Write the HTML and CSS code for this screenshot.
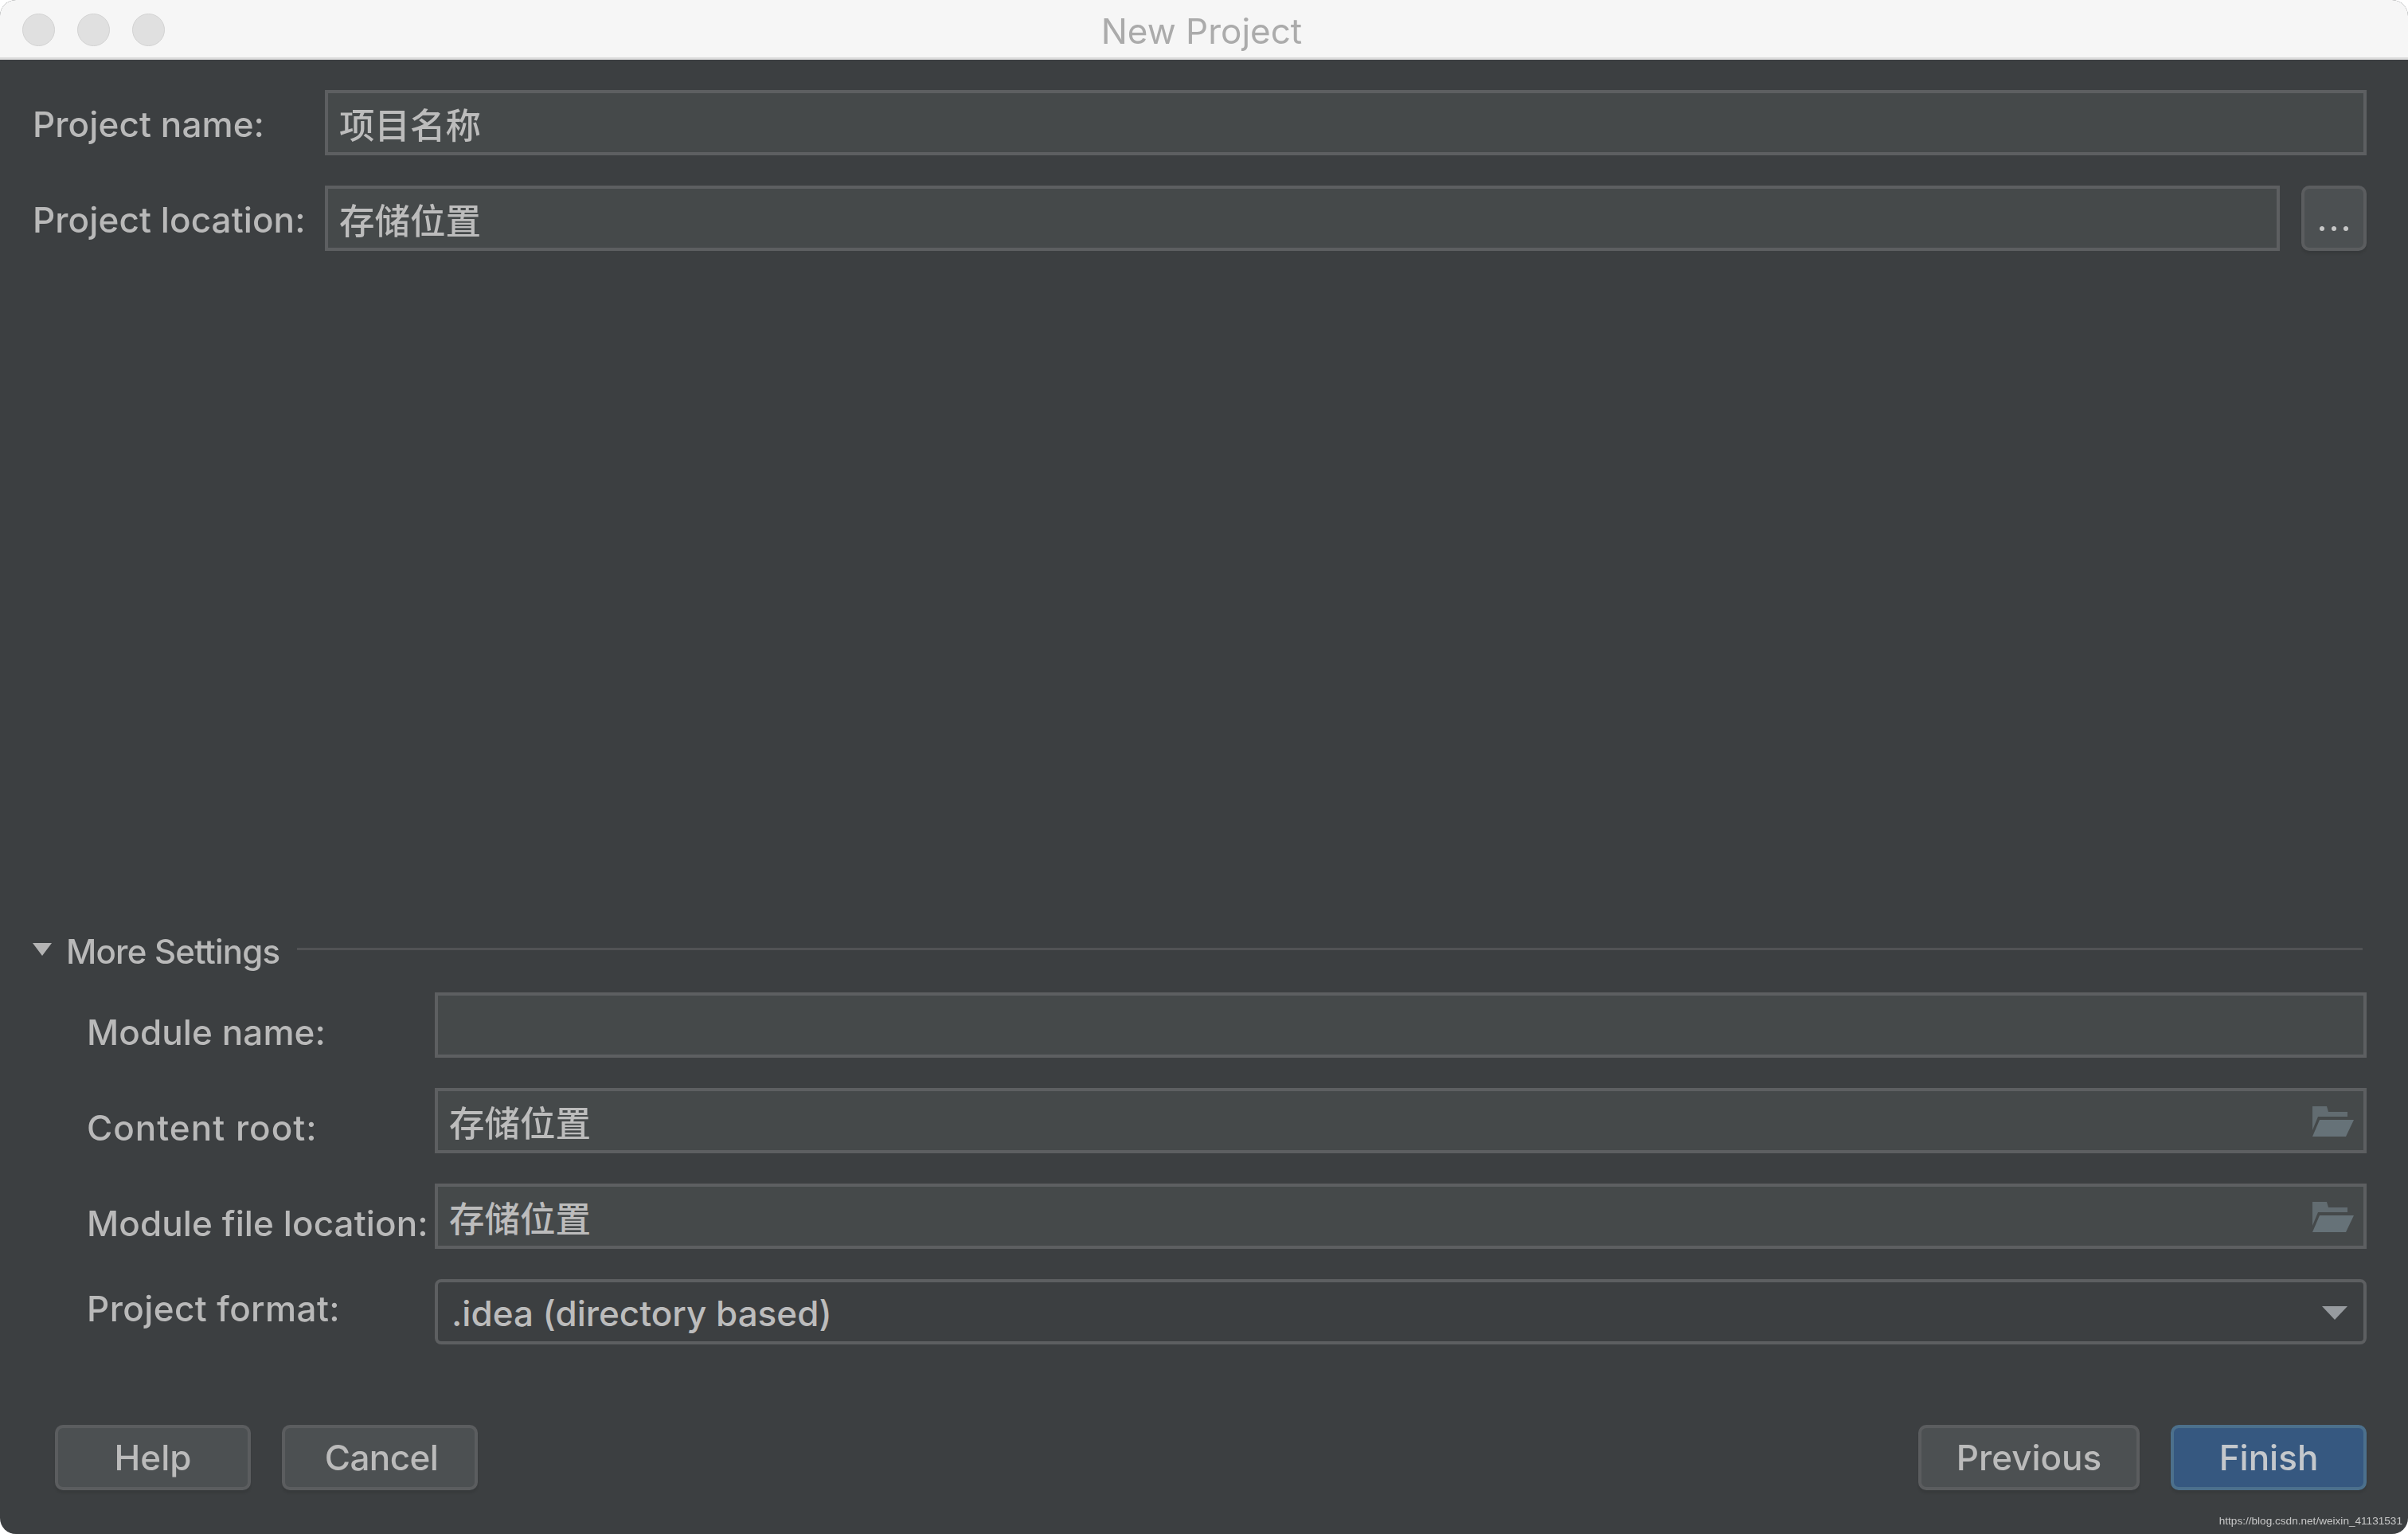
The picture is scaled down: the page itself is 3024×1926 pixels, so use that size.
FILE: index.html
```html
<!DOCTYPE html>
<html lang="zh">
<head>
<meta charset="utf-8">
<title>New Project</title>
<link rel="stylesheet" href="styles.css">
</head>
<body>
<div class="window">
  <header class="titlebar">
    <div class="lights"><span class="light"></span><span class="light"></span><span class="light"></span></div>
    <div class="title">New Project</div>
  </header>
  <main class="content">
    <section class="basic">
      <div class="label">Project name:</div>
      <div class="field wide">项目名称</div>
      <div class="label">Project location:</div>
      <div class="field">存储位置</div>
      <div class="browse">...</div>
    </section>
    <section class="more">
      <div class="more-head">
        <span class="disclosure"></span>
        <span class="more-title">More Settings</span>
        <span class="rule"></span>
      </div>
      <div class="settings">
        <div class="label low">Module name:</div>
        <div class="field"></div>
        <div class="label low spaced">Content root:</div>
        <div class="field">存储位置
          <svg class="folder" viewBox="0 0 52 38"><path class="folder-back" d="M0 0H18L20 7H44V13H7L0 30Z"/><path class="folder-front" d="M9 17H52L42 38H0Z"/></svg>
        </div>
        <div class="label low">Module file location:</div>
        <div class="field">存储位置
          <svg class="folder" viewBox="0 0 52 38"><path class="folder-back" d="M0 0H18L20 7H44V13H7L0 30Z"/><path class="folder-front" d="M9 17H52L42 38H0Z"/></svg>
        </div>
        <div class="label high">Project format:</div>
        <div class="select">.idea (directory based)<span class="caret"></span></div>
      </div>
    </section>
    <footer class="buttons">
      <div class="btn help">Help</div>
      <div class="btn cancel">Cancel</div>
      <div class="push"></div>
      <div class="btn previous">Previous</div>
      <div class="btn finish">Finish</div>
    </footer>
  </main>
  <div class="watermark">https://blog.csdn.net/weixin_41131531</div>
</div>
</body>
</html>
```
FILE: styles.css
```css
* { box-sizing: border-box; }
html, body { margin: 0; padding: 0; background: #fff; }
body { width: 3024px; height: 1926px; overflow: hidden; }

.window {
  position: relative;
  width: 3024px;
  height: 1926px;
  display: flex;
  flex-direction: column;
  border-radius: 20px;
  overflow: hidden;
  background: #3c3f41;
  color: #b9b9b9;
  font-family: Inter, "Noto Sans CJK SC", sans-serif;
  font-size: 44px;
  font-weight: 450;
  filter: blur(0.6px);
}

.titlebar {
  position: relative;
  flex: 0 0 75px;
  display: flex;
  align-items: center;
  justify-content: center;
  padding: 6px 6px 0 0;
  background: #f6f6f6;
  border-bottom: 3px solid #dcdcdc;
}
.lights {
  position: absolute;
  left: 28px;
  top: 17px;
  display: flex;
  gap: 28px;
}
.light {
  width: 41px;
  height: 41px;
  border-radius: 50%;
  background: #e0e0e0;
  border: 1px solid #d2d2d2;
}
.title { color: #ababab; font-size: 44px; font-weight: 400; }

.content {
  flex: 1;
  display: flex;
  flex-direction: column;
  padding: 38px 52px 55px 41px;
}

.basic {
  display: grid;
  grid-template-columns: 367px 1fr 82px;
  row-gap: 38px;
  align-items: center;
}
.basic .field:not(.wide) { margin-right: 27px; }
.wide { grid-column: 2 / 4; }

.label { white-space: nowrap; line-height: 52px; padding-top: 4px; letter-spacing: 0.1px; }
.low { padding-top: 18px; }
.high { padding-top: 0; margin-top: -8px; letter-spacing: 0.4px; }
.spaced { letter-spacing: 1px; }

.field {
  position: relative;
  height: 82px;
  display: flex;
  align-items: center;
  padding: 0 14px;
  background: #45494a;
  border: 4px solid #5d5f61;
  font-family: "Noto Sans CJK SC", sans-serif;
  font-size: 44.5px;
  color: #bcbcbc;
}

.browse {
  height: 82px;
  display: flex;
  align-items: center;
  justify-content: center;
  padding-top: 6px;
  background: #4c5052;
  border: 4px solid #5b5d5f;
  border-radius: 10px;
  box-shadow: 0 4px 3px rgba(0, 0, 0, 0.08);
  font-size: 36px;
  font-weight: 700;
  letter-spacing: 3px;
  text-indent: 3px;
  color: #c6c6c6;
}

.more { margin-top: auto; }
.more-head {
  display: flex;
  align-items: center;
  height: 52px;
  padding-top: 12px;
}
.disclosure {
  flex: none;
  width: 0;
  height: 0;
  margin-top: -4px;
  border-left: 12px solid transparent;
  border-right: 12px solid transparent;
  border-top: 16px solid #b4b4b4;
}
.more-title { margin-left: 18px; white-space: nowrap; font-size: 42px; letter-spacing: -0.8px; }
.rule {
  flex: 1;
  height: 3px;
  margin: -6px 5px 0 22px;
  background: #515355;
}

.settings {
  display: grid;
  grid-template-columns: 437px 1fr;
  row-gap: 38px;
  align-items: center;
  margin: 32px 0 0 68px;
}

.folder {
  position: absolute;
  right: 12px;
  top: 19px;
  width: 52px;
  height: 38px;
}
.folder-back { fill: #626c71; }
.folder-front { fill: #667278; }

.select {
  position: relative;
  height: 82px;
  display: flex;
  align-items: center;
  padding: 4px 17px 0;
  border: 4px solid #5d5f61;
  border-radius: 8px;
  background: #3c3f41;
  color: #bcbcbc;
}
.caret {
  position: absolute;
  right: 20px;
  top: 30px;
  width: 0;
  height: 0;
  border-left: 16px solid transparent;
  border-right: 16px solid transparent;
  border-top: 17px solid #979b9f;
}

.buttons {
  display: flex;
  gap: 39px;
  margin-top: 101px;
  margin-left: 28px;
}
.push { flex: 1; }
.btn {
  height: 82px;
  display: flex;
  align-items: center;
  justify-content: center;
  background: #4c5052;
  border: 4px solid #5b5d5f;
  border-radius: 10px;
  box-shadow: 0 4px 3px rgba(0, 0, 0, 0.08);
  color: #bbb;
}
.help, .cancel { width: 246px; }
.cancel { letter-spacing: -0.6px; padding-left: 4px; }
.previous { width: 278px; }
.finish {
  width: 246px;
  background: #365880;
  border-color: #4c708c;
  color: #c4c8cc;
}

.watermark {
  position: absolute;
  right: 7px;
  bottom: 9px;
  font-family: "Liberation Sans", sans-serif;
  font-size: 13.6px;
  font-weight: 400;
  line-height: 15px;
  color: #c8c8c8;
}
```
